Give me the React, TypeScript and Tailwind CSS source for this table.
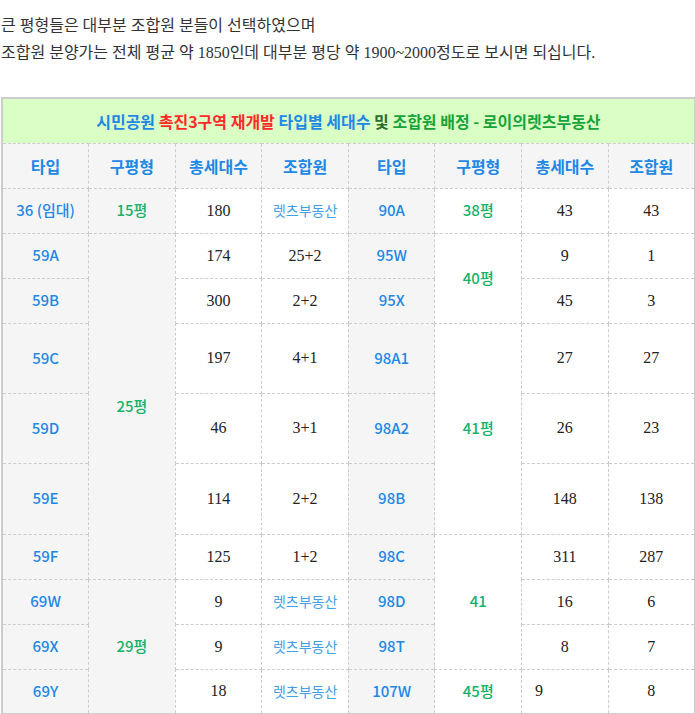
import React from 'react';

const serif = "font-['Liberation_Serif','Noto_Sans_CJK_KR',serif]";
const cell = 'border border-dashed border-[#cccccc] text-center align-middle';
const type = `${cell} bg-[#f5f5f5] text-[#1e88e5] font-medium text-[15px]`;
const pyeong = `${cell} text-[#17b26a] font-medium text-[15px]`;
const num = `${cell} text-[#222222] ${serif} text-[16px]`;
const lets = `${cell} text-[#42a0e6] text-[14px]`;

type Side = { t: string; p?: { v: string; span: number; gray?: boolean }; total: string; member: string; letsCell?: boolean; left?: boolean };

const rows: { h: number; a: Side; b: Side }[] = [
  { h: 45, a: { t: '36 (임대)', p: { v: '15평', span: 1, gray: true }, total: '180', member: '렛츠부동산', letsCell: true }, b: { t: '90A', p: { v: '38평', span: 1 }, total: '43', member: '43' } },
  { h: 45, a: { t: '59A', p: { v: '25평', span: 6, gray: true }, total: '174', member: '25+2' }, b: { t: '95W', p: { v: '40평', span: 2 }, total: '9', member: '1' } },
  { h: 45, a: { t: '59B', total: '300', member: '2+2' }, b: { t: '95X', total: '45', member: '3' } },
  { h: 70, a: { t: '59C', total: '197', member: '4+1' }, b: { t: '98A1', p: { v: '41평', span: 3 }, total: '27', member: '27' } },
  { h: 70, a: { t: '59D', total: '46', member: '3+1' }, b: { t: '98A2', total: '26', member: '23' } },
  { h: 71, a: { t: '59E', total: '114', member: '2+2' }, b: { t: '98B', total: '148', member: '138' } },
  { h: 45, a: { t: '59F', total: '125', member: '1+2' }, b: { t: '98C', p: { v: '41', span: 3 }, total: '311', member: '287' } },
  { h: 45, a: { t: '69W', p: { v: '29평', span: 3, gray: true }, total: '9', member: '렛츠부동산', letsCell: true }, b: { t: '98D', total: '16', member: '6' } },
  { h: 45, a: { t: '69X', total: '9', member: '렛츠부동산', letsCell: true }, b: { t: '98T', total: '8', member: '7' } },
  { h: 45, a: { t: '69Y', total: '18', member: '렛츠부동산', letsCell: true }, b: { t: '107W', p: { v: '45평', span: 1 }, total: '9', member: '8', left: true } },
];

function SideCells({ s }: { s: Side }) {
  return (
    <>
      <td className={type}>{s.t}</td>
      {s.p && (
        <td rowSpan={s.p.span} className={`${pyeong} ${s.p.gray ? 'bg-[#f5f5f5]' : ''}`}>
          {s.p.v}
        </td>
      )}
      <td className={`${num} ${s.left ? '!text-left pl-[13px]' : ''}`}>{s.total}</td>
      <td className={s.letsCell ? lets : num}>{s.member}</td>
    </>
  );
}

export default function App() {
  const heads = ['타입', '구평형', '총세대수', '조합원', '타입', '구평형', '총세대수', '조합원'];
  return (
    <div className="w-[695px] h-[714px] overflow-hidden bg-white font-['Noto_Sans_CJK_KR','Noto_Sans',sans-serif]">
      <div className={`pt-[12px] pl-[1px] text-[16px] leading-[27px] text-[#333333] ${serif}`}>
        <p>큰 평형들은 대부분 조합원 분들이 선택하였으며</p>
        <p>조합원 분양가는 전체 평균 약 1850인데 대부분 평당 약 1900~2000정도로 보시면 되십니다.</p>
      </div>
      <table className="mt-[31px] ml-[1px] w-[693px] table-fixed border-collapse border-2 border-solid border-[#cccccc] text-[15px]">
        <colgroup>
          {heads.map((_, i) => (
            <col key={i} className="w-[86.6px]" />
          ))}
        </colgroup>
        <tbody>
          <tr className="h-[45px]">
            <td colSpan={8} className="bg-[#d9ffc4] text-center font-bold text-[16px] border-b border-dashed border-[#cccccc]">
              <span className="text-[#1e88e5]">시민공원 </span>
              <span className="text-[#ff2a2a]">촉진3구역 재개발 </span>
              <span className="text-[#1e88e5]">타입별 세대수 </span>
              <span className="text-[#2e6b2e]">및 </span>
              <span className="text-[#17a33a]">조합원 배정 - 로이의렛츠부동산</span>
            </td>
          </tr>
          <tr className="h-[45px]">
            {heads.map((h, i) => (
              <td key={i} className={`${cell} bg-[#f5f5f5] text-[#1e88e5] font-bold text-[16px]`}>
                {h}
              </td>
            ))}
          </tr>
          {rows.map((r, i) => (
            <tr key={i} style={{ height: r.h }}>
              <SideCells s={r.a} />
              <SideCells s={r.b} />
            </tr>
          ))}
        </tbody>
      </table>
    </div>
  );
}
